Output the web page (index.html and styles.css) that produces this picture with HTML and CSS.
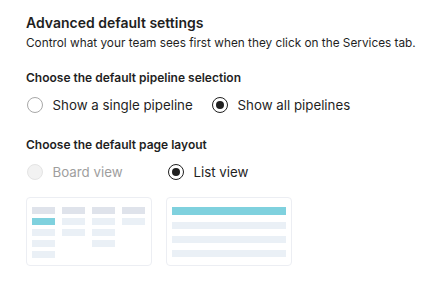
FILE: index.html
```html
<!DOCTYPE html>
<html>
<head>
<meta charset="utf-8">
<link rel="stylesheet" href="styles.css">
</head>
<body>
<div class="panel">
  <h2 class="title">Advanced default settings</h2>
  <p class="subtitle">Control what your team sees first when they click on the Services tab.</p>

  <h3 class="label">Choose the default pipeline selection</h3>
  <div class="radios">
    <label class="option option--wide"><span class="radio"></span><span class="text">Show a single pipeline</span></label>
    <label class="option"><span class="radio radio--on"></span><span class="text">Show all pipelines</span></label>
  </div>

  <h3 class="label label--second">Choose the default page layout</h3>
  <div class="radios">
    <label class="option option--board"><span class="radio radio--disabled"></span><span class="text text--disabled">Board view</span></label>
    <label class="option"><span class="radio radio--on"></span><span class="text">List view</span></label>
  </div>

  <div class="cards">
    <div class="card card--board">
      <div class="col">
        <span class="cell cell--head"></span>
        <span class="cell cell--accent"></span>
        <span class="cell"></span>
        <span class="cell"></span>
        <span class="cell"></span>
      </div>
      <div class="col">
        <span class="cell cell--head"></span>
        <span class="cell"></span>
        <span class="cell"></span>
      </div>
      <div class="col">
        <span class="cell cell--head"></span>
        <span class="cell"></span>
        <span class="cell"></span>
        <span class="cell"></span>
      </div>
      <div class="col">
        <span class="cell cell--head"></span>
        <span class="cell"></span>
      </div>
    </div>
    <div class="card card--list">
      <span class="row row--accent"></span>
      <span class="row"></span>
      <span class="row"></span>
      <span class="row"></span>
    </div>
  </div>
</div>
</body>
</html>
```

FILE: styles.css
```css
* { box-sizing: border-box; }
html, body { margin: 0; padding: 0; background: #ffffff; }
body {
  font-family: "Inter", "Lato", sans-serif;
  color: #1f1f1f;
}
.panel {
  padding: 13px 0 0 26px;
}
.title {
  margin: 0;
  font-size: 14px;
  line-height: 20px;
  font-weight: 600;
}
.subtitle {
  margin: 0;
  font-size: 11.8px;
  line-height: 20px;
  font-weight: 400;
  white-space: nowrap;
}
.label {
  margin: 15px 0 0;
  font-size: 12px;
  line-height: 20px;
  font-weight: 600;
}
.label--second { margin-top: 18px; }
.radios {
  display: flex;
  align-items: center;
  margin-top: 5px;
  height: 24px;
}
.option {
  display: flex;
  align-items: center;
  gap: 10px;
}
.option--wide { width: 185px; }
.option--board { width: 141px; }
.radio {
  width: 16px;
  height: 16px;
  border-radius: 50%;
  border: 1px solid #a8a8a8;
  background: #fff;
  margin-left: 0.5px;
  display: flex;
  align-items: center;
  justify-content: center;
  flex: none;
}
.radio--on { border: 1.5px solid #1f1f1f; }
.radio--on::after {
  content: "";
  width: 8px;
  height: 8px;
  border-radius: 50%;
  background: #1f1f1f;
}
.radio--disabled {
  border-color: #e4e4e4;
  background: #f2f2f2;
}
.text {
  font-size: 13.3px;
  line-height: 24px;
}
.text--disabled { color: #9e9e9e; }
.cards {
  display: flex;
  gap: 14px;
  margin-top: 13px;
}
.card {
  width: 126px;
  height: 69px;
  border: 1.5px solid #eceef3;
  border-radius: 4px;
  background: #fff;
}
.card--board {
  display: flex;
  gap: 7px;
  padding: 8.5px 0 0 4.5px;
}
.col {
  display: flex;
  flex-direction: column;
  gap: 4px;
  width: 23px;
}
.cell {
  display: block;
  height: 7px;
  background: #eaf0f6;
}
.cell--head { background: #dfe3eb; }
.cell--accent { background: #7fd1de; }
.card--list {
  display: flex;
  flex-direction: column;
  gap: 7px;
  padding: 8.5px 5px 0 4.5px;
}
.row {
  display: block;
  height: 7px;
  background: #eaf0f6;
}
.row--accent { height: 8px; background: #7fd1de; }
```
